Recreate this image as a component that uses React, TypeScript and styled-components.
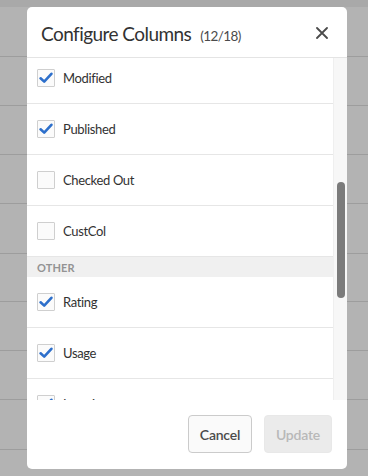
import React from "react";
import styled, { createGlobalStyle } from "styled-components";

const Global = createGlobalStyle`
  html, body { margin: 0; padding: 0; }
  body {
    width: 368px; height: 476px; overflow: hidden;
    background: #b3b3b3;
    font-family: Lato, "Open Sans", "Liberation Sans", sans-serif;
  }
`;

const Page = styled.div`
  position: relative;
  width: 368px;
  height: 476px;
  overflow: hidden;
  background: #b3b3b3;
`;

const TopStrip = styled.div`
  height: 7px;
  background: #a9a9a9;
`;

const BgRow = styled.div<{ $h: number }>`
  height: ${(p) => p.$h - 1}px;
  border-bottom: 1px solid #9d9d9d;
`;

const Dialog = styled.div`
  position: absolute;
  top: 7px;
  left: 27px;
  width: 320px;
  height: 462px;
  background: #fff;
  border-radius: 5px;
  display: flex;
  flex-direction: column;
  overflow: hidden;
`;

const Header = styled.div`
  height: 50px;
  flex: none;
  border-bottom: 1px solid #e4e4e4;
  display: flex;
  align-items: center;
  padding: 0 18px 0 14px;
`;

const Title = styled.h1`
  margin: 0;
  flex: 1;
  font-weight: 400;
  font-size: 19px;
  color: #323232;
  letter-spacing: -0.55px;
  display: flex;
  align-items: baseline;
  padding-top: 2px;
`;

const Count = styled.span`
  font-size: 13.5px;
  color: #4b4b4b;
  margin-left: 9px;
  letter-spacing: -0.6px;
`;

const CloseBtn = styled.button`
  border: 0;
  background: none;
  padding: 0;
  width: 14px;
  height: 14px;
  display: flex;
  align-items: center;
  justify-content: center;
  cursor: pointer;
  margin-top: 1px;
`;

const Body = styled.div`
  flex: none;
  height: 342px;
  display: flex;
  overflow: hidden;
`;

const ListViewport = styled.div`
  flex: 1;
  overflow: hidden;
`;

const List = styled.div`
  margin-top: -5px;
`;

const Row = styled.label`
  height: 50px;
  border-bottom: 1px solid #e6e6e6;
  display: flex;
  align-items: center;
  padding-left: 10px;
  gap: 8px;
  font-size: 13px;
  letter-spacing: -0.35px;
  color: #323232;
`;

const Box = styled.span<{ $checked: boolean }>`
  width: 16px;
  height: 16px;
  border: 1px solid #cfcfcf;
  border-radius: 1px;
  background: #fbfbfb;
  display: flex;
  align-items: center;
  justify-content: center;
  flex: none;
`;

const SectionHeader = styled.div`
  height: 20px;
  background: #f0f0f0;
  display: flex;
  align-items: center;
  padding-left: 10px;
  font-size: 11px;
  font-weight: 700;
  color: #939393;
  letter-spacing: 0.1px;
`;

const Track = styled.div`
  width: 14px;
  flex: none;
  background: #f7f7f7;
  border-left: 1px solid #efefef;
  box-sizing: border-box;
  display: flex;
  justify-content: center;
`;

const Thumb = styled.div`
  width: 8px;
  height: 116px;
  margin-top: 124px;
  border-radius: 4px;
  background: #7b7b7b;
`;

const Footer = styled.div`
  flex: 1;
  display: flex;
  justify-content: flex-end;
  align-items: flex-start;
  gap: 12px;
  padding: 15px 15px 0 0;
`;

const Button = styled.button<{ $disabled?: boolean }>`
  height: 38px;
  box-sizing: border-box;
  width: ${(p) => (p.$disabled ? 68 : 64)}px;
  padding: 0;
  border-radius: 4px;
  font-family: inherit;
  font-size: 14px;
  font-weight: 600;
  letter-spacing: -0.2px;
  border: 1px solid ${(p) => (p.$disabled ? "#e8e8e8" : "#cbcbcb")};
  background: ${(p) => (p.$disabled ? "#ebebeb" : "#fafafa")};
  color: ${(p) => (p.$disabled ? "#b8b8b8" : "#4b4b4b")};
`;

const Check = () => (
  <svg width="14" height="12" viewBox="0 0 14 12">
    <path d="M1.6 6.3 L5.2 9.6 L12.4 1.8" fill="none" stroke="#2d6fcb" strokeWidth="2.6" strokeLinecap="round" strokeLinejoin="round" />
  </svg>
);

const XIcon = () => (
  <svg width="12" height="12" viewBox="0 0 12 12">
    <path d="M1 1 L11 11 M11 1 L1 11" stroke="#4b4b4b" strokeWidth="1.8" strokeLinecap="round" />
  </svg>
);

type Item = { kind: "row"; label: string; checked: boolean } | { kind: "header"; label: string };

const items: Item[] = [
  { kind: "row", label: "Modified", checked: true },
  { kind: "row", label: "Published", checked: true },
  { kind: "row", label: "Checked Out", checked: false },
  { kind: "row", label: "CustCol", checked: false },
  { kind: "header", label: "OTHER" },
  { kind: "row", label: "Rating", checked: true },
  { kind: "row", label: "Usage", checked: true },
  { kind: "row", label: "Location", checked: true },
];

const bgRows = [50, 49, 49, 49, 50, 48, 49, 49, 50, 49];

export default function App() {
  return (
    <Page>
      <Global />
      <TopStrip />
      {bgRows.map((h, i) => (
        <BgRow key={i} $h={h} />
      ))}
      <Dialog role="dialog">
        <Header>
          <Title>
            Configure Columns<Count>(12/18)</Count>
          </Title>
          <CloseBtn aria-label="Close">
            <XIcon />
          </CloseBtn>
        </Header>
        <Body>
          <ListViewport>
            <List>
              {items.map((it) =>
                it.kind === "header" ? (
                  <SectionHeader key={it.label}>{it.label}</SectionHeader>
                ) : (
                  <Row key={it.label}>
                    <Box $checked={it.checked}>{it.checked && <Check />}</Box>
                    {it.label}
                  </Row>
                )
              )}
            </List>
          </ListViewport>
          <Track>
            <Thumb />
          </Track>
        </Body>
        <Footer>
          <Button>Cancel</Button>
          <Button $disabled>Update</Button>
        </Footer>
      </Dialog>
    </Page>
  );
}
